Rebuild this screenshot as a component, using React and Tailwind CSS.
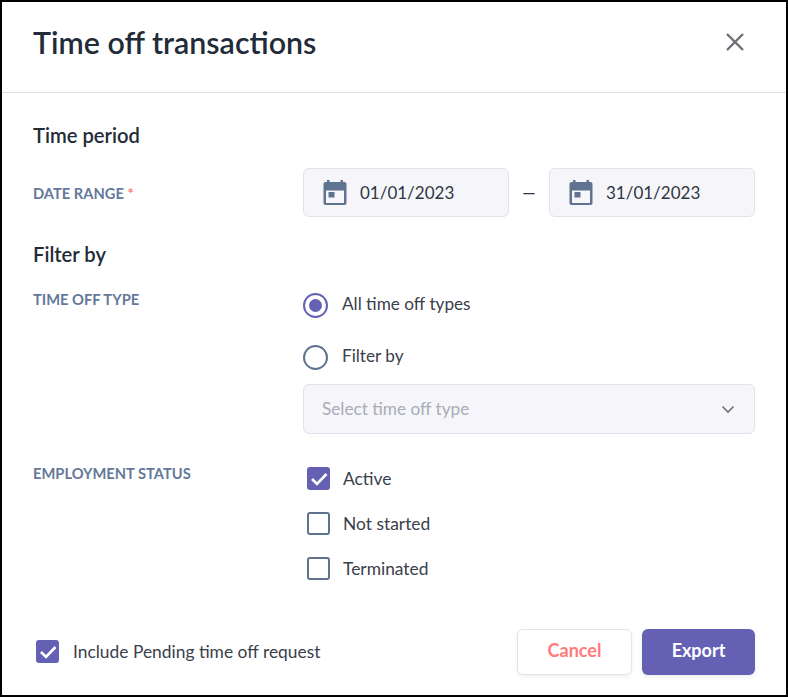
const CalendarIcon = () => (
  <svg width="24" height="25" viewBox="0 0 24 25" className="shrink-0">
    <path fill="#5f7391" fillRule="evenodd" d="M4 0h2.5v2h11V0H20v2h1.5a2 2 0 0 1 2 2v19a2 2 0 0 1-2 2h-19a2 2 0 0 1-2-2V4a2 2 0 0 1 2-2H4V0zM3 10.5V22.5a.5.5 0 0 0 .5.5h17a.5.5 0 0 0 .5-.5V10.5H3z" />
    <rect x="5.5" y="12" width="6" height="5.5" fill="#5f7391" />
  </svg>
);

const Check = () => (
  <svg width="18" height="14" viewBox="0 0 18 14" fill="none">
    <path d="M2 7l5 5L16.500 2" stroke="white" strokeWidth="2.6" />
  </svg>
);

const Checkbox = ({ checked }) =>
  checked ? (
    <span className="flex h-[23px] w-[23px] items-center justify-center rounded-[3px] bg-[#6461b4]">
      <Check />
    </span>
  ) : (
    <span className="block h-[23px] w-[23px] rounded-[3px] border-[2.5px] border-[#5f7391] bg-white" />
  );

const DateBox = ({ value }) => (
  <div className="flex h-[49px] w-[206px] items-center rounded-md border border-[#dfe3ec] bg-[#f5f5fa] pl-[19px]">
    <CalendarIcon />
    <span className="ml-[13px] text-[17px] text-[#2f3541]">{value}</span>
  </div>
);

const Label = ({ children }) => (
  <div className="text-[14.7px] font-bold uppercase leading-[20px] text-[#64799a]">{children}</div>
);

export default function App() {
  return (
    <div
      className="flex h-[697px] w-[788px] flex-col border-2 border-black bg-white text-[#222b38]"
      style={{ fontFamily: "Lato, sans-serif" }}
    >
      <div className="flex h-[91px] shrink-0 items-center justify-between border-b border-[#dcdfe6] pl-[31px] pr-[41px]">
        <h1 className="-mt-[10px] text-[30.4px] font-semibold leading-none text-[#222b38]">Time off transactions</h1>
        <svg width="20" height="20" viewBox="0 0 20 20" className="-mt-[10px]">
          <path d="M2 2l16 16M18 2L2 18" stroke="#6b6f76" strokeWidth="2.4" />
        </svg>
      </div>

      <div className="flex flex-1 flex-col pl-[31px] pr-[31px]">
        <div className="mt-[30px] text-[20.2px] font-semibold leading-6">Time period</div>

        <div className="mt-[21px] flex">
          <div className="w-[270px] pt-[15px]">
            <Label>
              Date range <span className="text-[#ff7b7b]">*</span>
            </Label>
          </div>
          <div className="flex items-center">
            <DateBox value="01/01/2023" />
            <span className="w-[40px] text-center text-[17px] text-[#2f3541]">—</span>
            <DateBox value="31/01/2023" />
          </div>
        </div>

        <div className="mt-[25px] text-[20.2px] font-semibold leading-6">Filter by</div>

        <div className="mt-[23px] flex">
          <div className="w-[270px]">
            <Label>Time off type</Label>
          </div>
          <div className="w-[452px] pt-[4px]">
            <div className="flex h-[25px] items-center">
              <span className="flex h-[25px] w-[25px] items-center justify-center rounded-full border-[2.5px] border-[#6461b4]">
                <span className="h-[13px] w-[13px] rounded-full bg-[#6461b4]" />
              </span>
              <span className="-mt-[4px] ml-[14px] text-[17.2px] text-[#3a404b]">All time off types</span>
            </div>
            <div className="mt-[27px] flex h-[25px] items-center">
              <span className="h-[25px] w-[25px] rounded-full border-[2.5px] border-[#5f7391]" />
              <span className="-mt-[4px] ml-[14px] text-[17.2px] text-[#3a404b]">Filter by</span>
            </div>
            <div className="mt-[14px] flex h-[50px] items-center justify-between rounded-md border border-[#dfe3ec] bg-[#f5f5fa] pl-[18px] pr-[19px]">
              <span className="text-[17.2px] text-[#a9adb5]">Select time off type</span>
              <svg width="14" height="9" viewBox="0 0 14 9" fill="none">
                <path d="M1.5 1.500L7 7l5.500-5.500" stroke="#6b6f76" strokeWidth="1.6" />
              </svg>
            </div>
          </div>
        </div>

        <div className="mt-[29px] flex">
          <div className="w-[270px]">
            <Label>Employment status</Label>
          </div>
          <div className="flex flex-col gap-[22px] pl-[4px] pt-[4px]">
            <div className="flex h-[23px] items-center gap-[13px]">
              <Checkbox checked />
              <span className="pt-[2px] text-[17.400px] text-[#3a404b]">Active</span>
            </div>
            <div className="flex h-[23px] items-center gap-[13px]">
              <Checkbox />
              <span className="pt-[2px] text-[17.400px] text-[#3a404b]">Not started</span>
            </div>
            <div className="flex h-[23px] items-center gap-[13px]">
              <Checkbox />
              <span className="pt-[2px] text-[17.400px] text-[#3a404b]">Terminated</span>
            </div>
          </div>
        </div>

        <div className="mt-[49px] flex items-center justify-between">
          <div className="flex items-center gap-[14px] pl-[3px]">
            <Checkbox checked />
            <span className="text-[17.400px] text-[#3a404b]">Include Pending time off request</span>
          </div>
          <div className="flex gap-[10px]">
            <button className="h-[46px] w-[115px] rounded-md border border-[#e2e4ea] bg-white pb-[4px] text-[18px] font-bold text-[#ff7b7b] shadow-[0_2px_4px_rgba(0,0,0,0.06)]">
              Cancel
            </button>
            <button className="h-[46px] w-[113px] rounded-md bg-[#6461b4] pb-[4px] text-[18px] font-bold text-white shadow-[0_2px_4px_rgba(0,0,0,0.08)]">
              Export
            </button>
          </div>
        </div>
      </div>
    </div>
  );
}
